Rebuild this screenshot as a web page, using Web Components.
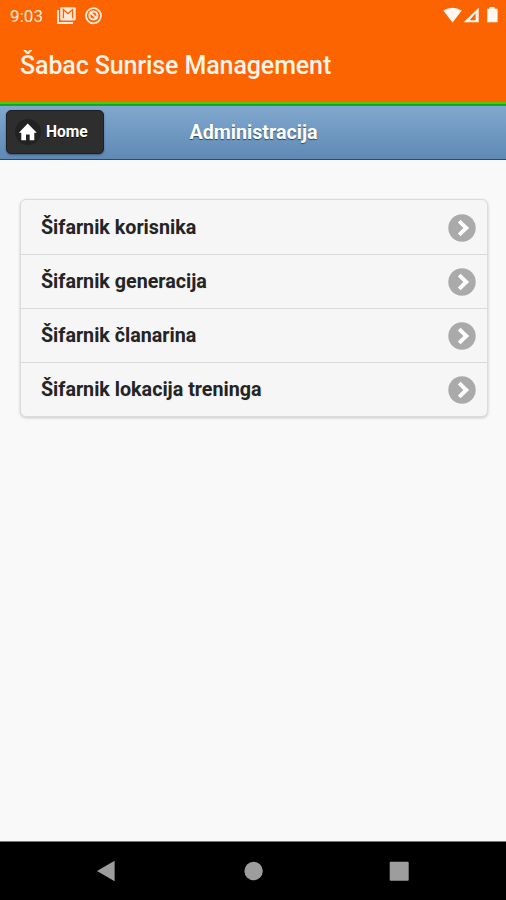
<!DOCTYPE html>
<html lang="sr-Latn">
<head>
<meta charset="utf-8">
<title>Šabac Sunrise Management</title>
<style>
html, body { margin: 0; height: 100%; overflow: hidden; }
body { font-family: Roboto, "Liberation Sans", sans-serif; background: #f9f9f9; }
</style>
</head>
<body>
<phone-screen>
  <status-bar slot="top" time="9:03"></status-bar>
  <app-bar slot="top">Šabac Sunrise Management</app-bar>
  <page-header slot="top"><home-button slot="action">Home</home-button>Administracija</page-header>
  <list-view>
    <list-item>Šifarnik korisnika</list-item>
    <list-item>Šifarnik generacija</list-item>
    <list-item>Šifarnik članarina</list-item>
    <list-item>Šifarnik lokacija treninga</list-item>
  </list-view>
  <nav-bar slot="bottom"></nav-bar>
</phone-screen>
<script>
function component(name, render) {
  customElements.define(name, class extends HTMLElement {
    constructor() { super(); this.attachShadow({ mode: 'open' }); }
    connectedCallback() {
      const t = document.createElement('template');
      t.innerHTML = render(this);
      this.shadowRoot.replaceChildren(t.content.cloneNode(true));
    }
  });
}

component('phone-screen', () => `
<style>
:host { display: flex; flex-direction: column; width: 506px; height: 900px; background: #f9f9f9; }
main { flex: 1; padding: 39px 18px 0 20px; }
</style>
<slot name="top"></slot><main><slot></slot></main><slot name="bottom"></slot>`);

component('status-bar', el => `
<style>
:host { display: flex; align-items: center; height: 32px; box-sizing: border-box; padding: 0 8px 0 10px; background: #fb6400; color: #ffe9da; font-size: 17px; line-height: 32px; }
.time { width: 46px; letter-spacing: .1px; }
svg { display: block; }
.end { margin-left: auto; }
</style>
<span class="time">${el.getAttribute('time')}</span>
<svg width="48" height="32" viewBox="56 0 48 32" fill="none" stroke="#ffe9da">
  <path d="M58 10V23H73" stroke-width="1.8"/>
  <rect x="60.3" y="7.2" width="15.4" height="13.2" rx="1.3" fill="#ffe9da" stroke="none"/>
  <path d="M63.4 18.2V9.6L68 13.6L72.6 9.6V18.2" stroke="#fb6400" stroke-width="1.3"/>
  <path d="M99.9 19.7A7.5 7.5 0 1 1 101 15.4C100.8 19 98.7 21.7 95.5 22.8" stroke-width="1.7"/>
  <circle cx="93.4" cy="15.4" r="4" stroke-width="2"/>
  <path d="M90 12L97 18.7" stroke-width="2"/>
</svg>
<svg class="end" width="58" height="32" viewBox="440 0 58 32" fill="#fff8f2">
  <path d="M443.3 10.6Q452.5 4.8 461.8 10.6L452.5 22.4Z"/>
  <path fill-rule="evenodd" d="M478.7 7.8V22.3H463.6ZM475.6 13.2L469.5 20.2H475.6Z"/>
  <path d="M489.7 7H494.7V8.7H497.6V22.3H487.2V8.7H489.7Z"/>
</svg>`);

component('app-bar', () => `
<style>
:host { display: block; height: 69px; box-sizing: border-box; padding-left: 20px; background: #fb6400; color: #fff3ea; font-size: 25px; letter-spacing: -.11px; font-weight: 500; line-height: 68px; white-space: nowrap; }
</style><slot></slot>`);

component('page-header', () => `
<style>
:host { display: grid; grid-template-columns: 1fr auto 1fr; align-items: center; height: 59px; box-sizing: border-box; padding: 0 6px; border-bottom: 1px solid #35475a;
  background: linear-gradient(#b38a00 0 1px, #4ecb00 1px 3px, #14a32a 3px 4px, #4a7d78 4px 5px, #81a8ce 5px, #5f8ab5 100%); color: #fff; }
.action { padding-top: 4px; }
h1 { margin: 0; padding: 5px 0 0 1px; font-size: 19.7px; font-weight: 700; line-height: 26px; text-shadow: 0 1.3px 1px #2c4862; }
</style>
<div class="action"><slot name="action"></slot></div><h1><slot></slot></h1>`);

component('home-button', () => `
<style>
:host { display: flex; align-items: center; width: 98px; height: 44px; box-sizing: border-box; padding-left: 8px; gap: 4px; border: 1px solid #1f2022; border-radius: 5px; background: #2e2e2e; color: #fff; font-size: 15.6px; font-weight: 700; text-shadow: 0 1px 0 #111; box-shadow: 0 1px 2px rgba(20,40,60,.5); }
svg { display: block; }
</style>
<svg width="27" height="28" viewBox="0 0 27 28">
  <circle cx="13" cy="14" r="13" fill="#222"/>
  <path fill="#fff" d="M12.7 5.6L21.8 14.8H19.3V22.3H14.7V16.6H11V22.3H6.3V14.8H3.9Z"/>
</svg><slot></slot>`);

component('list-view', () => `
<style>
:host { display: block; box-sizing: border-box; height: 218px; border: 1px solid #dcdcdc; border-radius: 6px; background: #f6f6f6; box-shadow: 0 1px 3px rgba(0,0,0,.2); }
::slotted(*) { border-top: 1px solid #dadada; }
::slotted(:first-child) { border-top-color: transparent; }
</style><slot></slot>`);

component('list-item', () => `
<style>
:host { display: flex; align-items: center; justify-content: space-between; box-sizing: border-box; height: 54px; padding: 0 11px 0 20px; color: #242424; font-size: 19.7px; font-weight: 700; white-space: nowrap; text-shadow: 0 1px 0 #eee; }
span { padding-bottom: 1px; }
svg { display: block; }
</style>
<span><slot></slot></span>
<svg width="28" height="28" viewBox="0 0 28 28"><circle cx="14" cy="14" r="13.7" fill="#aaa"/><path d="M11.2 7.2L18.3 14L11.2 20.8" fill="none" stroke="#fff" stroke-width="3.9"/></svg>`);

component('nav-bar', () => `
<style>
:host { display: block; height: 59px; box-sizing: border-box; border-top: 1px solid #777; background: #000; }
svg { display: block; }
</style>
<svg width="506" height="58" viewBox="0 842 506 58" fill="#9d9d9d">
  <path d="M97 871L114.6 860.8V881.2Z"/><circle cx="253.6" cy="871" r="9.2"/><rect x="389.7" y="861.7" width="19" height="19" rx="1"/>
</svg>`);
</script>
</body>
</html>
